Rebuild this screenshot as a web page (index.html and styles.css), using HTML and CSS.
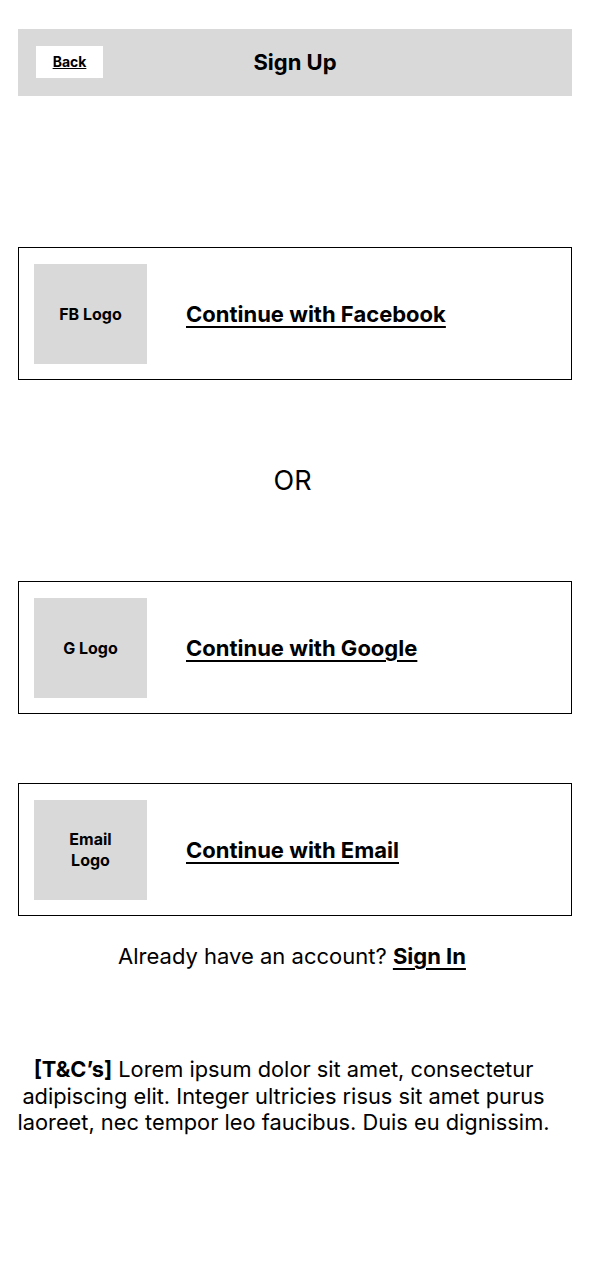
FILE: index.html
```html
<!DOCTYPE html>
<html>
<head>
<title>Sign Up</title>
<link rel="stylesheet" href="styles.css">
</head>
<body>
	<div class="page">
		<div class="top-bar">
			<a class="back-btn" href="#">Back</a>
			<label class="top-title">Sign Up</label>
		</div>

		<a class="login-card card-fb" href="#">
			<span class="logo-box">FB Logo</span>
			<span class="card-text">Continue with Facebook</span>
		</a>

		<div class="or-line">OR</div>

		<a class="login-card" href="#">
			<span class="logo-box">G Logo</span>
			<span class="card-text">Continue with Google</span>
		</a>

		<a class="login-card card-email" href="#">
			<span class="logo-box">Email<br>Logo</span>
			<span class="card-text">Continue with Email</span>
		</a>

		<p class="have-account">Already have an account? <a href="#">Sign In</a></p>

		<p class="terms"><b>[T&amp;C’s]</b> Lorem ipsum dolor sit amet, consectetur adipiscing elit. Integer ultricies risus sit amet purus laoreet, nec tempor leo faucibus. Duis eu dignissim.</p>
	</div>
</body>
</html>
```
FILE: styles.css
```css
body{
	margin:0;
	background:#FFFFFF;
	color:#000000;
	font-family:Inter, "Noto Sans", sans-serif;
}
.page{
	padding:29px 18px 0 18px;
}
.top-bar{
	height:67px;
	background:#D9D9D9;
	display:flex;
	align-items:center;
	position:relative;
	padding-left:18px;
}
.back-btn{
	width:67px;
	height:32px;
	margin-top:-2px;
	background:#FFFFFF;
	color:#000000;
	font-size:14px;
	font-weight:700;
	display:flex;
	align-items:center;
	justify-content:center;
	text-decoration:underline;
}
.top-title{
	position:absolute;
	left:0;
	right:0;
	text-align:center;
	font-size:22px;
	font-weight:700;
	margin-top:-2px;
	pointer-events:none;
}
.login-card{
	display:flex;
	align-items:center;
	height:100px;
	padding:16px 15px 15px 15px;
	border:1px solid #000000;
	color:#000000;
	text-decoration:none;
}
.card-fb{
	margin-top:151px;
}
.card-email{
	margin-top:69px;
}
.logo-box{
	width:113px;
	height:100px;
	background:#D9D9D9;
	display:flex;
	align-items:center;
	justify-content:center;
	text-align:center;
	font-size:16px;
	font-weight:700;
	line-height:21px;
	flex-shrink:0;
}
.card-text{
	margin-left:39px;
	font-size:22px;
	font-weight:700;
	text-decoration:underline;
	text-underline-offset:4px;
}
.or-line{
	height:201px;
	line-height:201px;
	text-align:center;
	font-size:27px;
	padding-right:5px;
}
.have-account{
	margin:27px 0 0 0;
	text-align:center;
	font-size:22px;
	padding-right:6px;
}
.have-account a{
	color:#000000;
	font-weight:700;
	text-underline-offset:4px;
}
.terms{
	margin:87px 20px 0 -3px;
	text-align:center;
	font-size:21.8px;
	line-height:26.5px;
}
```
